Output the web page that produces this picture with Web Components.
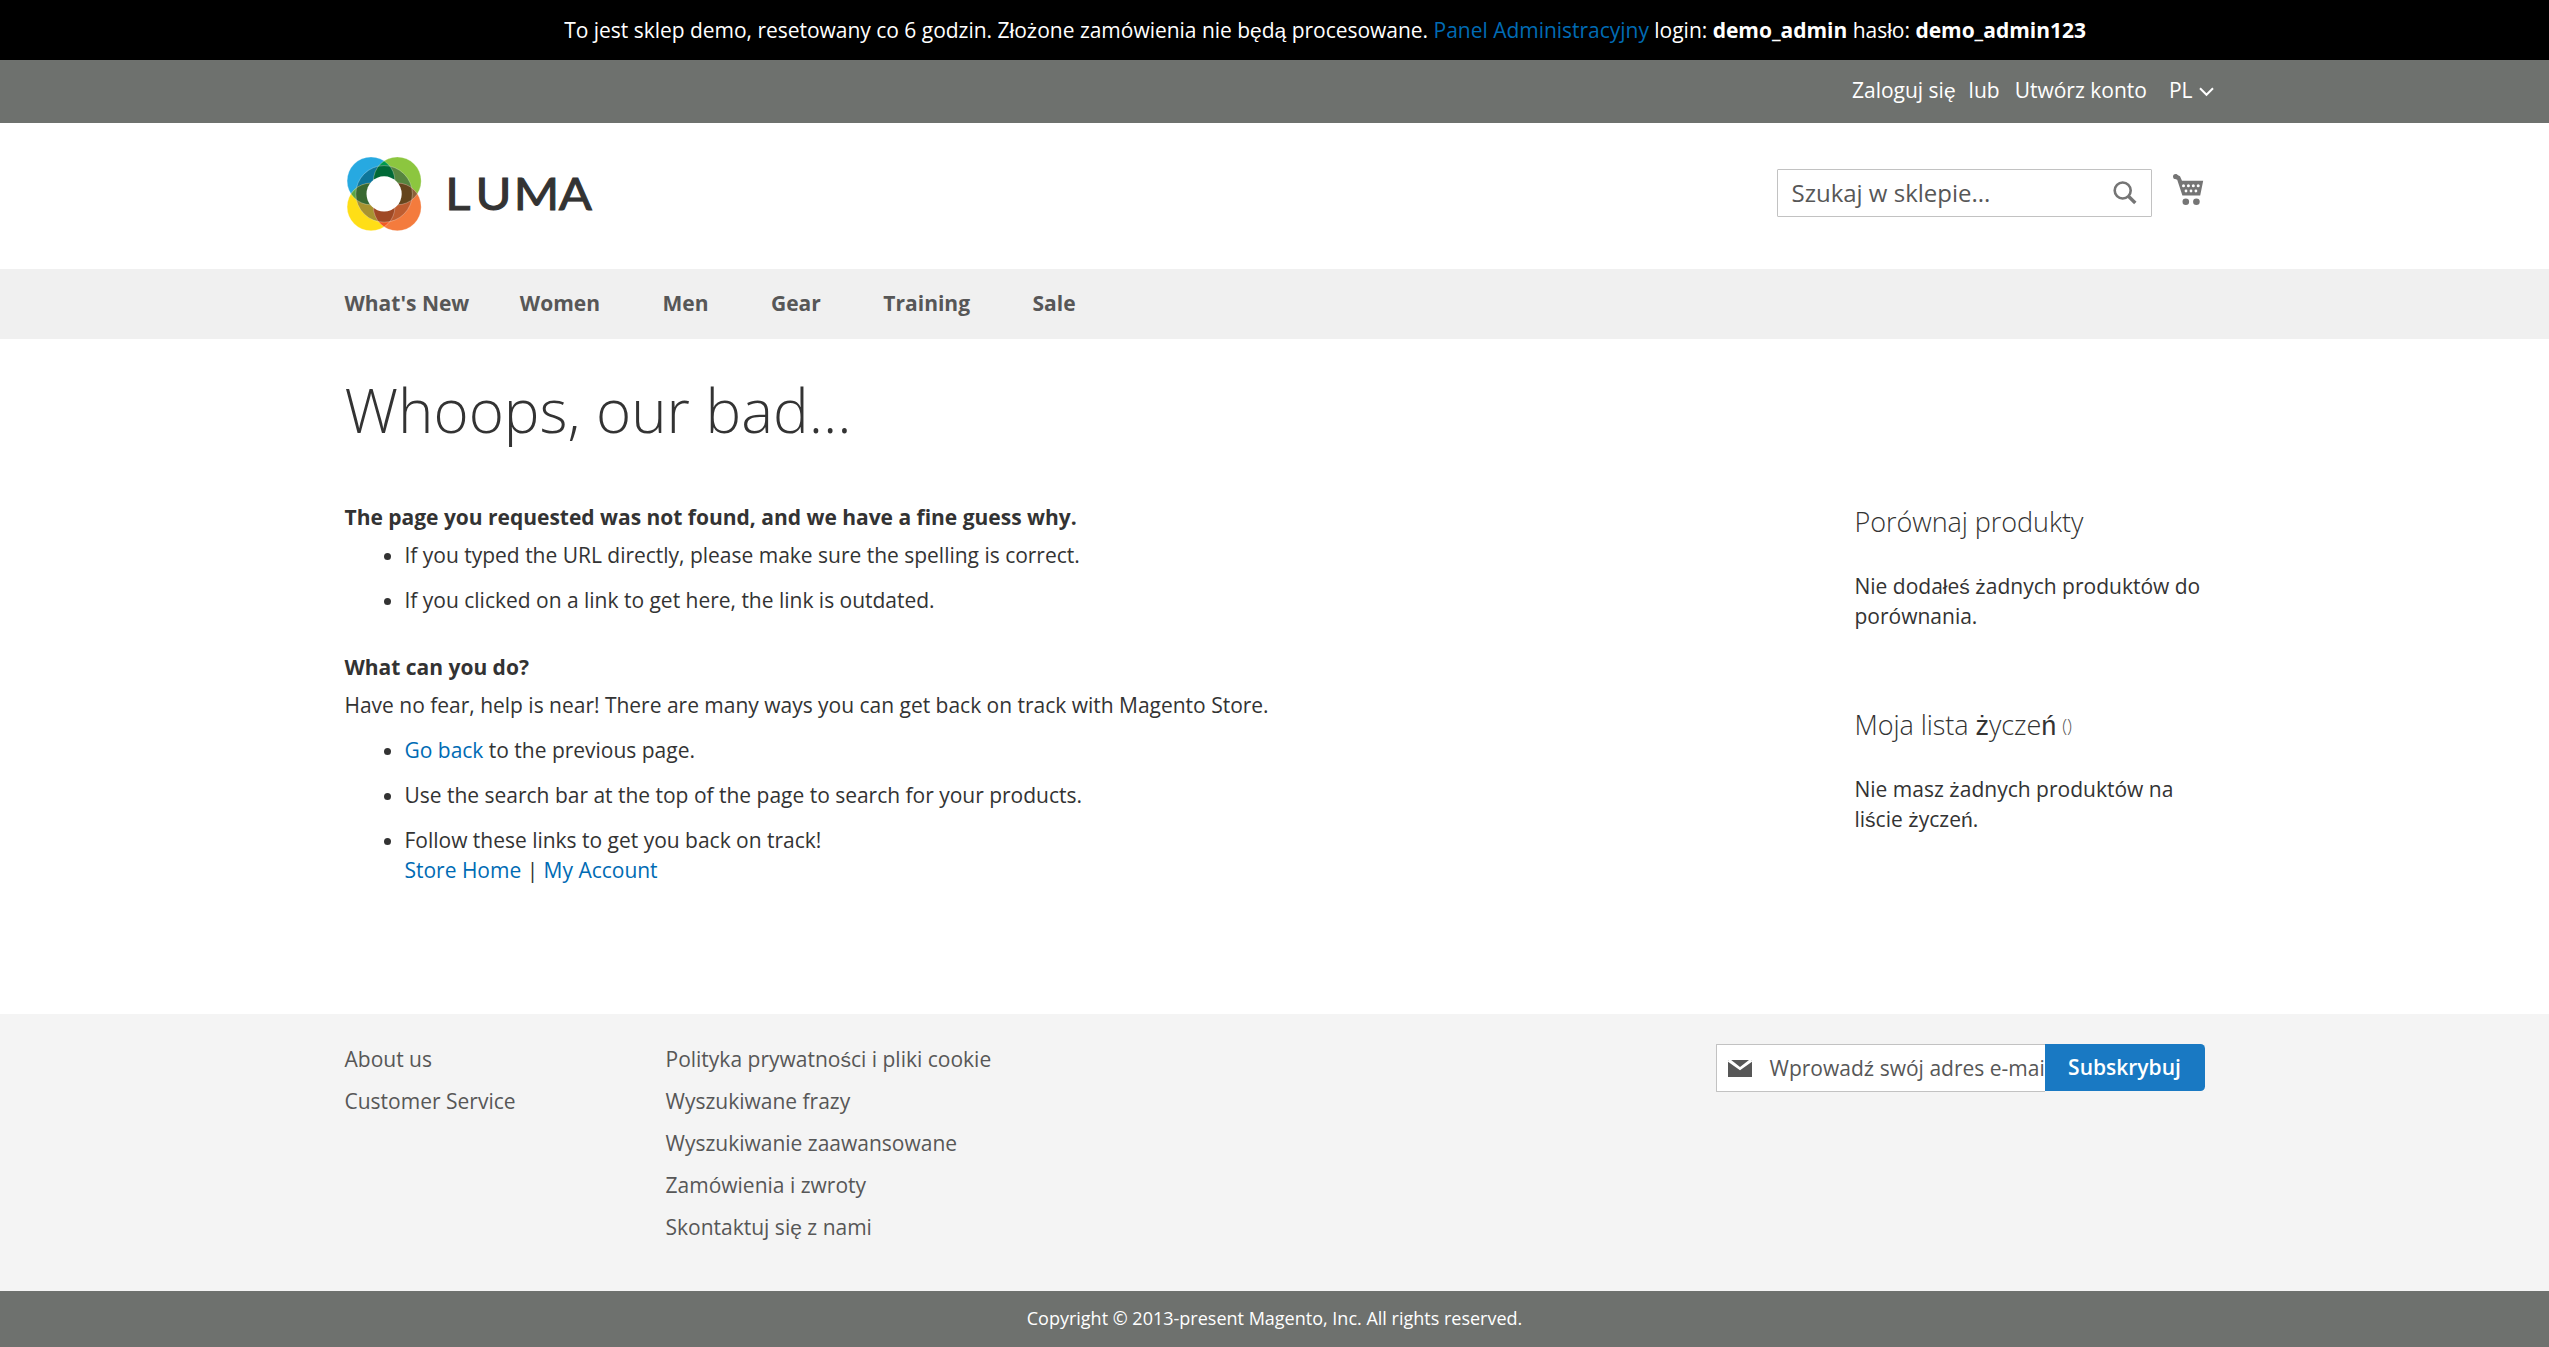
<!DOCTYPE html>
<html lang="pl">
<head>
<meta charset="utf-8">
<title>Luma</title>
<style>
html,body{margin:0;padding:0;background:#fff}
body{font:400 21px/30px "Open Sans","Liberation Sans",sans-serif;color:#333;height:1347px;overflow:hidden}
</style>
</head>
<body>
<luma-page></luma-page>
<script>
// Wraps Latin Extended-A letters so that they take the secondary face.
function markExtended(root){
  const walker=document.createTreeWalker(root,NodeFilter.SHOW_TEXT);
  const nodes=[];
  while(walker.nextNode()) nodes.push(walker.currentNode);
  for(const node of nodes){
    if(node.parentElement && node.parentElement.closest('style')) continue;
    if(!/[\u0100-\u017f]/.test(node.data)) continue;
    const out=document.createDocumentFragment();
    for(const part of node.data.split(/([\u0100-\u017f]+)/)){
      if(!part) continue;
      if(/[\u0100-\u017f]/.test(part)){
        const s=document.createElement('span');
        s.style.cssText='font-family:"Liberation Sans",sans-serif;line-height:0';
        s.textContent=part;
        out.append(s);
      } else out.append(part);
    }
    node.replaceWith(out);
  }
}
const base='<style>:host{display:block}*{box-sizing:border-box}a{color:#006bb4;text-decoration:none}ul{margin:0;padding:0}.wrap{width:1920px;margin:0 auto;padding:0 30px}svg{display:block}</style>';
function define(name,html){
  const t=document.createElement('template');
  t.innerHTML=base+html;
  customElements.define(name,class extends HTMLElement{
    constructor(){
      super();
      const r=this.attachShadow({mode:'open'});
      r.append(t.content.cloneNode(true));
      markExtended(r);
      markExtended(this);
    }
  });
}

define('luma-notice',`<style>
:host{height:60px;background:#000;color:#fff;padding:15px 0 0 101px;text-align:center;box-sizing:border-box;white-space:nowrap;letter-spacing:-.022px}
b{font-weight:700}</style>To jest sklep demo, resetowany co 6 godzin. Złożone zamówienia nie będą procesowane. <a>Panel Administracyjny</a> login: <b>demo_admin</b> hasło: <b>demo_admin123</b>`);

define('luma-panel',`<style>
:host{height:63px;background:#6e716e;color:#fff}
.wrap{display:flex;justify-content:flex-end;padding:15px 21px 0 0;white-space:nowrap}
.lub{margin:0 15px 0 13px}.pl{margin-left:22px}
svg{margin:12px 0 0 6px}</style>
<div class="wrap"><span>Zaloguj się</span><span class="lub">lub</span><span>Utwórz konto</span><span class="pl">PL</span>
<svg width="15" height="10" viewBox="0 0 15 10"><path d="M1 1.2 7.5 7.8 14 1.2" fill="none" stroke="#fff" stroke-width="2"/></svg></div>`);

define('luma-logo',`<style>:host{width:260px;height:76px}</style>
<svg width="260" height="76" viewBox="-1.3 -.2 260 76">
<defs>
<clipPath id="tl"><circle cx="24.7" cy="24.7" r="23.9"/></clipPath>
<clipPath id="br"><circle cx="51" cy="50.7" r="23.9"/></clipPath>
<clipPath id="ring"><circle cx="37.8" cy="37.7" r="28.3"/></clipPath>
</defs>
<circle cx="24.7" cy="24.7" r="23.9" fill="#27a9e1"/>
<circle cx="51" cy="24.7" r="23.9" fill="#8cc63f"/>
<circle cx="24.7" cy="50.7" r="23.9" fill="#ffde16"/>
<circle cx="51" cy="50.7" r="23.9" fill="#f47b3d"/>
<g clip-path="url(#tl)"><circle cx="51" cy="24.7" r="23.9" fill="#009a4e"/><circle cx="24.7" cy="50.7" r="23.9" fill="#59a545"/></g>
<g clip-path="url(#br)"><circle cx="51" cy="24.7" r="23.9" fill="#8c6239"/><circle cx="24.7" cy="50.7" r="23.9" fill="#f15a24"/></g>
<g clip-path="url(#ring)">
<circle cx="24.7" cy="24.7" r="23.9" fill="#0d769a"/>
<circle cx="51" cy="24.7" r="23.9" fill="#56853f"/>
<circle cx="24.7" cy="50.7" r="23.9" fill="#a89330"/>
<circle cx="51" cy="50.7" r="23.9" fill="#bf5d30"/>
<g clip-path="url(#tl)"><circle cx="51" cy="24.7" r="23.9" fill="#006937"/><circle cx="24.7" cy="50.7" r="23.9" fill="#396931"/></g>
<g clip-path="url(#br)"><circle cx="51" cy="24.7" r="23.9" fill="#65451d"/><circle cx="24.7" cy="50.7" r="23.9" fill="#a04925"/></g>
</g>
<g fill="none" stroke="#fff" stroke-opacity=".4" stroke-width=".7"><circle cx="24.7" cy="24.7" r="23.9"/><circle cx="51" cy="24.7" r="23.9"/><circle cx="24.7" cy="50.7" r="23.9"/><circle cx="51" cy="50.7" r="23.9"/><circle cx="37.8" cy="37.7" r="28.3"/></g>
<circle cx="37.8" cy="37.7" r="17.6" fill="#fff"/>
<text transform="scale(1.1 1)" x="90 117.5 152.2 193.2" y="54" font-family="Lato" font-weight="400" font-size="44.5" fill="#333" stroke="#333" stroke-width="1">LUMA</text>
</svg>`);

define('luma-search',`<style>
:host{width:375px;height:48px;border:1px solid #c2c2c2;border-radius:1px;box-sizing:border-box;background:#fff}
div{display:flex;justify-content:space-between;padding:8px 14px 0 14px;font-size:24px;color:#575757}
svg{margin:3px 0 0}</style>
<div><span>Szukaj w sklepie...</span><svg width="24" height="24" viewBox="0 0 24 24" fill="none" stroke="#757575"><circle cx="9.7" cy="9.5" r="8" stroke-width="2.6"/><path d="M15.2 15 22.3 22" stroke-width="3.4"/></svg></div>`);

define('luma-cart',`<style>:host{width:32px;height:32px}</style>
<svg width="32" height="32" viewBox=".4 0 32 32" fill="#757575"><circle cx="2.9" cy="2.6" r="2.5"/><path d="M1.2 4.4 3.5.2 7.4 2.2 9.4 6.8H30.6L27.6 21.4H9.8L4.6 5.8Z"/><circle cx="13.2" cy="27.7" r="3.3"/><circle cx="23.8" cy="27.7" r="3.3"/>
<g fill="#fff"><circle cx="10.9" cy="11.8" r="1.5"/><circle cx="15.8" cy="11.8" r="1.5"/><circle cx="20.7" cy="11.8" r="1.5"/><circle cx="25.6" cy="11.8" r="1.5"/><circle cx="13.4" cy="17" r="1.4"/><circle cx="18.4" cy="17" r="1.4"/><circle cx="23.3" cy="17" r="1.4"/></g></svg>`);

define('luma-header',`<style>
:host{height:146px}
.wrap{display:flex;align-items:flex-start;padding-top:33px}
luma-search{margin:13px 0 0 auto}luma-cart{margin:18px 0 0 21px}</style>
<div class="wrap"><luma-logo></luma-logo><luma-search></luma-search><luma-cart></luma-cart></div>`);

define('luma-nav',`<style>
:host{height:70px;background:#f0f0f0;color:#575757;font-weight:700}
.wrap{display:flex;padding-top:19px;gap:62.5px}
span:first-child{margin-right:-12px}</style>
<div class="wrap"><span>What's New</span><span>Women</span><span>Men</span><span>Gear</span><span>Training</span><span>Sale</span></div>`);

define('luma-section',`<style>
b{display:block;font-weight:700;margin:-1px 0 8.5px}</style><b><slot name="title"></slot></b><slot></slot>`);

define('luma-article',`<style>
:host{flex:1;letter-spacing:-.014px}
ul{padding-left:60px}li{margin-bottom:15px}p{margin:0 0 15px}
luma-section+luma-section{margin-top:37.5px}luma-section li:last-child{margin-bottom:0}</style>
<luma-section><span slot="title">The page you requested was not found, and we have a fine guess why.</span>
<ul><li>If you typed the URL directly, please make sure the spelling is correct.</li><li>If you clicked on a link to get here, the link is outdated.</li></ul></luma-section>
<luma-section><span slot="title">What can you do?</span>
<p>Have no fear, help is near! There are many ways you can get back on track with Magento Store.</p>
<ul><li><a>Go back</a> to the previous page.</li><li>Use the search bar at the top of the page to search for your products.</li><li>Follow these links to get you back on track!<br><a>Store Home</a> | <a>My Account</a></li></ul></luma-section>`);

define('luma-block',`<style>
h2{font-weight:300;font-size:27px;line-height:39px;margin:-1px 0 30px;letter-spacing:-.06px}</style><h2><slot name="title"></slot></h2><slot></slot>`);

define('luma-aside',`<style>
:host{width:350px}
luma-block+luma-block{margin-top:75px}
small{font-size:18px;color:#575757;line-height:0;position:relative;top:-3px;margin-left:-1px}</style>
<luma-block><span slot="title">Porównaj produkty</span>Nie dodałeś żadnych produktów do porównania.</luma-block>
<luma-block><span slot="title">Moja lista życzeń <small>()</small></span>Nie masz żadnych produktów na liście życzeń.</luma-block>`);

define('luma-main',`<style>
:host{height:675px}
h1{font-weight:300;font-size:60px;line-height:66px;margin:0 0 60px;padding-top:37.5px}
.cols{display:flex}</style>
<div class="wrap"><h1>Whoops, our bad...</h1><div class="cols"><luma-article></luma-article><luma-aside></luma-aside></div></div>`);

define('luma-newsletter',`<style>
:host{margin-left:auto}
.row{display:flex;align-items:flex-start}
.field{width:329px;height:48px;background:#fff;border:1px solid #c2c2c2;border-right:0;border-radius:1px 0 0 1px;display:flex;overflow:hidden;white-space:nowrap;padding:8px 0 0 11px;color:#575757}
svg{margin:7px 18px 0 0;flex:none}
.btn{width:160px;height:47px;background:#1979c3;color:#fff;font-weight:600;border-radius:0 4.5px 4.5px 0;text-align:center;padding-top:8px}</style>
<div class="row"><div class="field"><svg width="24" height="17" viewBox="0 0 24 17" fill="#575757"><path d="M0 0 0 17H24V0L12 9.5Z"/><path d="M3.2 0H21L12 7Z"/><path d="M.2.6 12 9 23.8.6" fill="none" stroke="#fff" stroke-width="2"/></svg><span>Wprowadź swój adres e-mail</span></div><div class="btn">Subskrybuj</div></div>`);

define('luma-footer',`<style>
:host{height:277px;background:#f4f4f4;color:#575757}
.wrap{display:flex;padding-top:30px}
ul{list-style:none;width:321px}li{margin-bottom:12px}
.links{display:flex}.second{width:500px}</style>
<div class="wrap"><div class="links"><ul><li>About us</li><li>Customer Service</li></ul><ul class="second"><li>Polityka prywatności i pliki cookie</li><li>Wyszukiwane frazy</li><li>Wyszukiwanie zaawansowane</li><li>Zamówienia i zwroty</li><li>Skontaktuj się z nami</li></ul></div><luma-newsletter></luma-newsletter></div>`);

define('luma-copyright',`<style>
:host{height:56px;box-sizing:border-box;padding-top:14px;background:#6e716e;color:#fff;text-align:center;font-size:18px;line-height:26px}</style>Copyright © 2013-present Magento, Inc. All rights reserved.`);

define('luma-page',`<luma-notice></luma-notice><luma-panel></luma-panel><luma-header></luma-header><luma-nav></luma-nav><luma-main></luma-main><luma-footer></luma-footer><luma-copyright></luma-copyright>`);
</script>
</body>
</html>
